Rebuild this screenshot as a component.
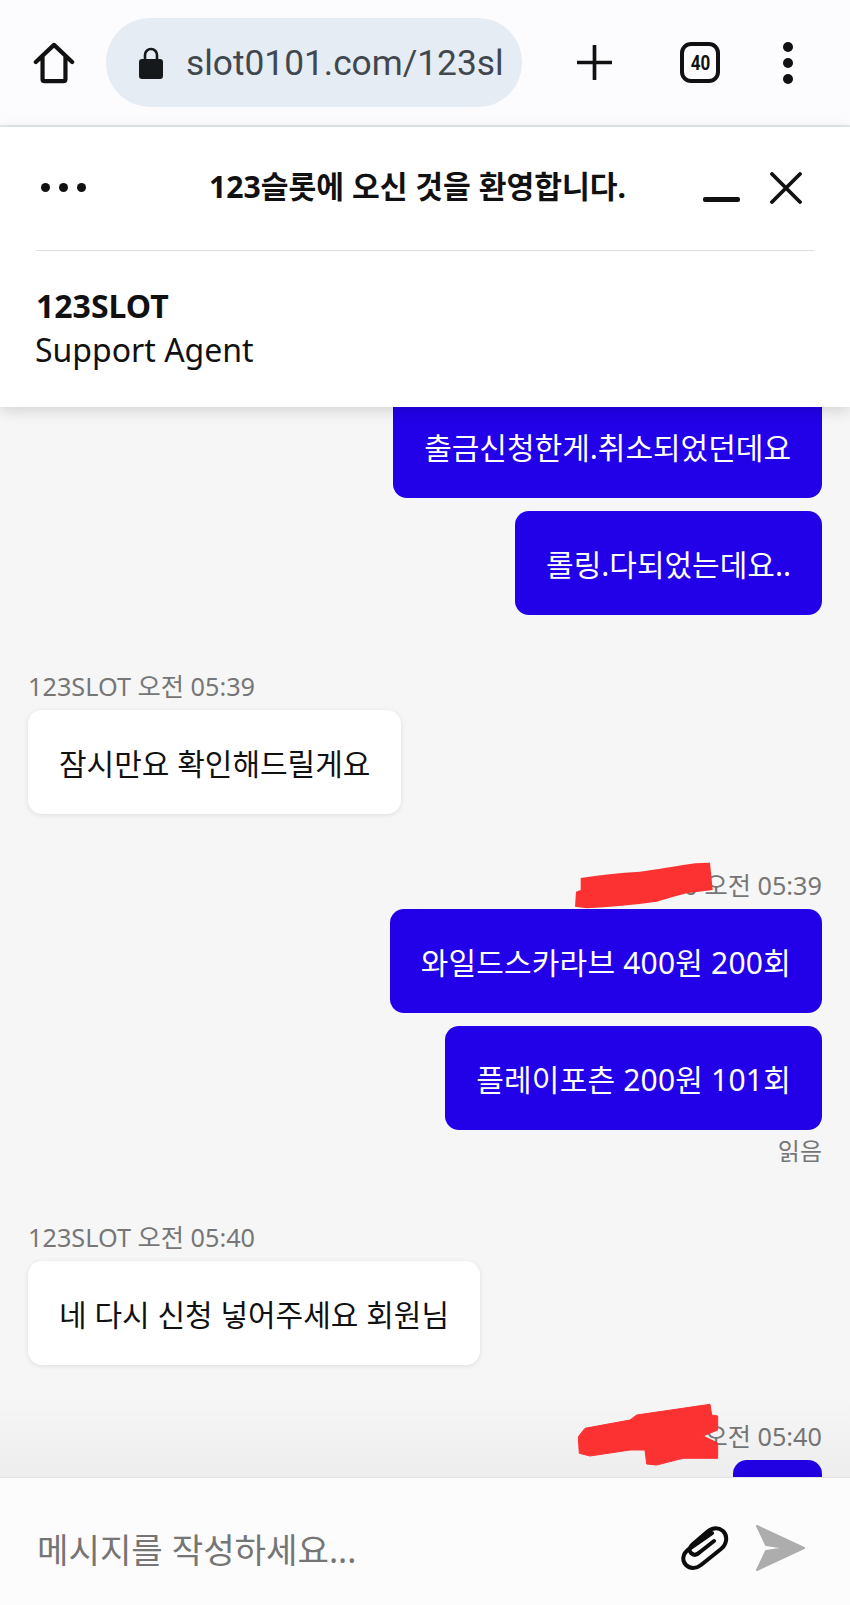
<div class="page">
  <div class="browser">
    <svg class="home" viewBox="0 0 44 44" width="42" height="42" aria-hidden="true"><path d="M3 21 L22 3 L41 21 M10 15 V39 a2 2 0 0 0 2 2 H32 a2 2 0 0 0 2 -2 V15" fill="none" stroke="#111" stroke-width="4.4" stroke-linejoin="round" stroke-linecap="round"/></svg>
    <div class="omnibox">
      <svg viewBox="0 0 24 32" width="24" height="32" aria-hidden="true"><path d="M6 13 V8 a6 6 0 0 1 12 0 V13" fill="none" stroke="#16191c" stroke-width="2.6"/><rect x="0" y="12" width="24" height="20" rx="3" fill="#16191c"/></svg>
      <span class="url">slot0101.com/123sl</span>
    </div>
    <svg class="plus" viewBox="0 0 36 36" width="35" height="35" aria-hidden="true"><path d="M18 1 V35 M1 18 H35" stroke="#111" stroke-width="3.8" stroke-linecap="round"/></svg>
    <div class="tabs"><span>40</span></div>
    <div class="kebab"><i></i><i></i><i></i></div>
  </div>

  <div class="chat-top">
    <div class="titlebar">
      <div class="dots"><i></i><i></i><i></i></div>
      <div class="title">123슬롯에 오신 것을 환영합니다.</div>
      <div class="minimize"></div>
      <svg class="close" viewBox="0 0 32 32" width="32" height="32" aria-hidden="true"><path d="M2 2 L30 30 M30 2 L2 30" stroke="#111" stroke-width="3.8" stroke-linecap="round"/></svg>
    </div>
    <div class="agent">
      <div class="agent-name">123SLOT</div>
      <div class="agent-role">Support Agent</div>
    </div>
  </div>

  <div class="messages">
    <div class="thread mine first">
      <div class="bubble out">출금신청한게.취소되었던데요</div>
      <div class="bubble out">롤링.다되었는데요..</div>
    </div>
    <div class="thread theirs">
      <div class="meta">123SLOT 오전 05:39</div>
      <div class="bubble in">잠시만요 확인해드릴게요</div>
    </div>
    <div class="thread mine">
      <div class="meta">0 오전 05:39</div>
      <div class="bubble out wide">와일드스카라브 400원 200회</div>
      <div class="bubble out wide">플레이포츤 200원 101회</div>
      <div class="read">읽음</div>
    </div>
    <div class="thread theirs">
      <div class="meta">123SLOT 오전 05:40</div>
      <div class="bubble in">네 다시 신청 넣어주세요 회원님</div>
    </div>
    <div class="thread mine">
      <div class="meta">오전 05:40</div>
      <div class="bubble out stub"></div>
    </div>
    <div class="fade"></div>
    <svg class="scribble one" viewBox="0 0 140 50" width="140" height="50" aria-hidden="true"><path d="M6.7 18 C25 15 45 13 66 11.7 C85 9 98 7 109 5 Q122 2.5 136 2.7 L138.7 30 L112.7 33.3 Q98 37 82.7 41.7 C60 45 35 47 12.7 48.3 L1 46.7 L2 31.7 L6.7 30 Z" fill="#fc3232"/></svg>
    <svg class="scribble two" viewBox="0 0 145 66" width="145" height="66" aria-hidden="true"><path d="M10 28.3 L55 20 L61.7 15 L135 4.3 L136.7 15 L142.7 16 L142.7 30 L128 36 L142.7 43 L142.7 58.3 L108 58.3 L81.7 65 L71.7 64 L70 50 L55 50 L15 56 L4.3 53.3 L3.3 36.7 Z" fill="#fc3232" stroke="#fc3232" stroke-width="1" stroke-linejoin="round"/></svg>
  </div>

  <div class="composer">
    <div class="placeholder">메시지를 작성하세요...</div>
    <svg class="clip" viewBox="0 0 50 46" width="50" height="46" aria-hidden="true"><path d="M33 8 L10 24 C3 29 3 36 7 40 C11 44 17 44 22 40 L42 24 C48 19 49 11 44 6 C39 2 33 3 28 7 L14 19 C10 23 10 26 12 28 C15 31 18 30 21 27 L35 16" fill="none" stroke="#0c0c0c" stroke-width="4" stroke-linecap="round" stroke-linejoin="round"/></svg>
    <svg class="send" viewBox="0 0 52 48" width="52" height="48" aria-hidden="true"><path d="M3 2 L50 24 L3 46 L12 27 L32 24 L12 21 Z" fill="#adadad" stroke="#adadad" stroke-width="2" stroke-linejoin="round"/></svg>
  </div>
</div>

<style>
  :global(body) { margin: 0; }
  .page {
    width: 850px;
    height: 1605px;
    display: flex;
    flex-direction: column;
    overflow: hidden;
    background: #f6f6f7;
    font-family: "Noto Sans", "Noto Sans CJK KR", sans-serif;
    color: #111;
  }
  .browser {
    flex: 0 0 127px;
    box-sizing: border-box;
    display: flex;
    align-items: center;
    background: #fcfcfe;
    border-bottom: 2px solid #e4e9ee;
    padding: 0 0 0 33px;
  }
  .omnibox {
    margin-left: 31px;
    width: 416px;
    height: 89px;
    box-sizing: border-box;
    border-radius: 44px;
    background: #e6ecf3;
    display: flex;
    align-items: center;
    gap: 23px;
    padding-left: 33px;
    overflow: hidden;
  }
  .url {
    font-family: Roboto, sans-serif;
    font-size: 35.3px;
    color: #41474e;
    white-space: nowrap;
  }
  .plus { margin-left: 55px; }
  .tabs {
    margin-left: 68px;
    width: 40px;
    height: 41px;
    box-sizing: border-box;
    border: 4px solid #111;
    border-radius: 11px;
    display: grid;
    place-items: center;
    font: 700 20px Roboto, sans-serif;
  }
  .tabs span { display: block; transform: scaleX(0.85); }
  .kebab { margin-left: 63px; display: flex; flex-direction: column; gap: 6px; }
  .kebab i { width: 10px; height: 10px; border-radius: 50%; background: #111; }

  .chat-top {
    flex: 0 0 280px;
    box-sizing: border-box;
    position: relative;
    z-index: 2;
    background: #fff;
    box-shadow: 0 4px 14px rgba(0, 0, 0, 0.14);
    padding: 0 36px;
  }
  .titlebar {
    height: 124px;
    box-sizing: border-box;
    border-bottom: 1.5px solid #dedede;
    display: flex;
    align-items: center;
    padding: 0 12px 2px 5px;
  }
  .dots { display: flex; gap: 9px; }
  .dots i { width: 9px; height: 9px; border-radius: 50%; background: #111; }
  .title {
    flex: 1;
    text-align: center;
    font-size: 30.2px;
    font-weight: 700;
    white-space: nowrap;
    padding-left: 46px;
    margin-bottom: 6px;
  }
  .minimize {
    width: 37px;
    height: 5px;
    border-radius: 2px;
    background: #111;
    margin: 24px 30px 0 0;
  }
  .agent { padding-top: 33px; }
  .agent-name { font-size: 32px; font-weight: 700; line-height: 44px; }
  .agent-role { font-size: 32px; line-height: 44px; margin-left: -1px; }

  .messages {
    flex: 1;
    min-height: 0;
    position: relative;
    overflow: hidden;
    display: flex;
    flex-direction: column;
    padding: 0 28px;
  }
  .thread { display: flex; flex-direction: column; gap: 13px; margin-top: 54px; }
  .thread.first { margin-top: -13px; }
  .mine { align-items: flex-end; }
  .theirs { align-items: flex-start; }
  .meta {
    font-size: 25.25px;
    line-height: 34px;
    color: #767676;
    margin-bottom: -6px;
    white-space: nowrap;
  }
  .bubble {
    height: 104px;
    box-sizing: border-box;
    display: flex;
    align-items: center;
    padding: 0 31px;
    font-size: 30px;
    border-radius: 14px;
    white-space: nowrap;
  }
  .wide { letter-spacing: 0.2px; }
  .out { background: #2200e8; color: #fff; }
  .in { background: #fff; color: #111; box-shadow: 0 1px 5px rgba(0, 0, 0, 0.1); }
  .stub { width: 89px; padding: 0; }
  .read { font-size: 24px; line-height: 30px; color: #767676; margin-top: -7px; }
  .fade {
    position: absolute;
    left: 0;
    right: 0;
    bottom: 0;
    height: 80px;
    background: linear-gradient(rgba(0, 0, 0, 0), rgba(0, 0, 0, 0.035));
    pointer-events: none;
  }
  .scribble { position: absolute; }
  .scribble.one { left: 574px; top: 453px; }
  .scribble.two { left: 575px; top: 993px; }

  .composer {
    flex: 0 0 128px;
    box-sizing: border-box;
    border-top: 1px solid #e2e2e2;
    background: #fcfcfc;
    display: flex;
    align-items: center;
    padding: 12px 44px 0 37px;
  }
  .placeholder { flex: 1; font-size: 34.2px; color: #757575; }
  .clip { margin-right: 25px; }
</style>
